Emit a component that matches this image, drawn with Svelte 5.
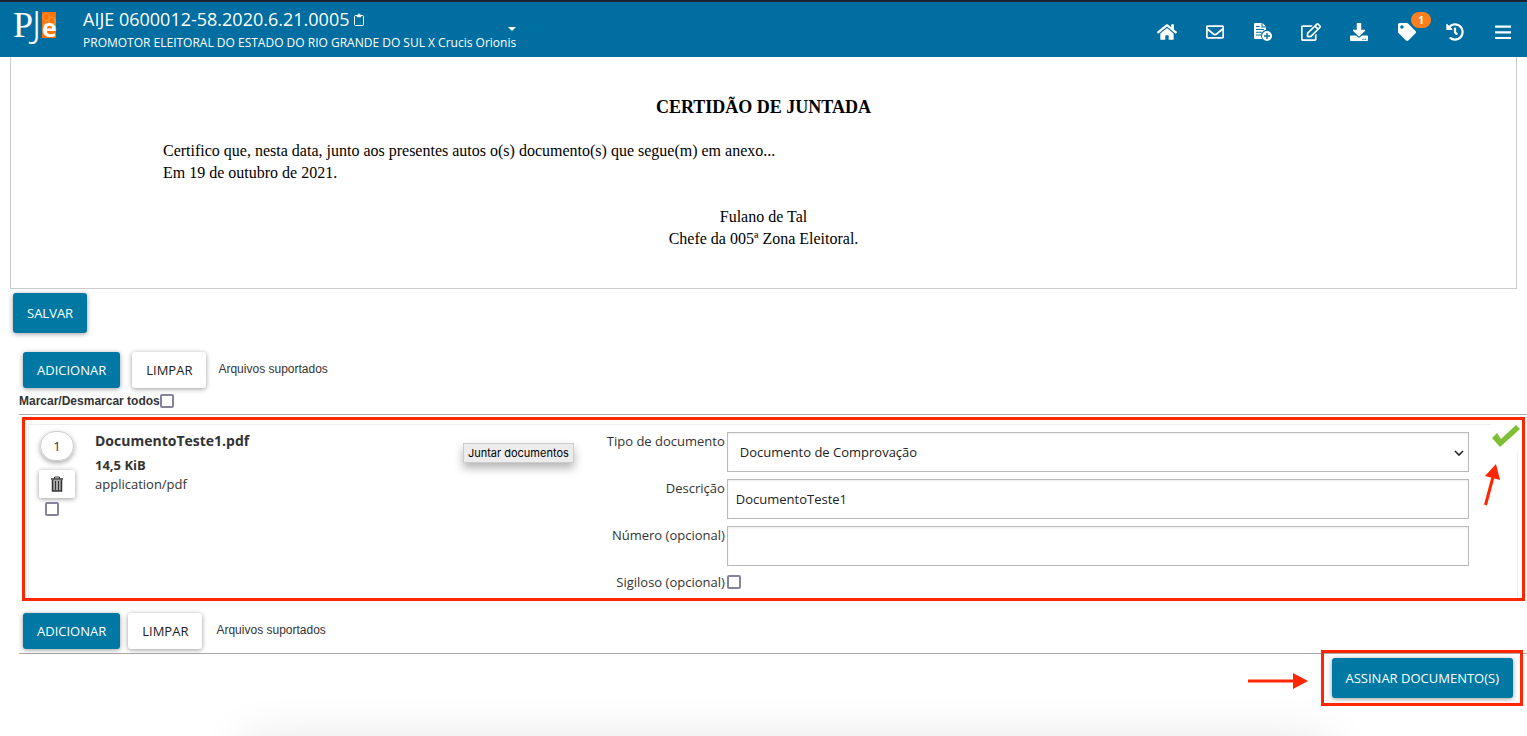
<script>
	let checkAll = $state(false);
	let selected = $state(false);
	let tipo = $state('Documento de Comprovação');
	let descricao = $state('DocumentoTeste1');
	let numero = $state('');
	let sigiloso = $state(false);

	const arquivo = {
		ordem: 1,
		nome: 'DocumentoTeste1.pdf',
		tamanho: '14,5 KiB',
		mime: 'application/pdf'
	};

	// ícones do menu superior
	const menu = [
		{
			title: 'Início',
			box: '0 0 576 512',
			w: 20,
			d: 'M280.37 148.26L96 300.11V464a16 16 0 0 0 16 16l112.06-.29a16 16 0 0 0 15.92-16V368a16 16 0 0 1 16-16h64a16 16 0 0 1 16 16v95.64a16 16 0 0 0 16 16.05L464 480a16 16 0 0 0 16-16V300L295.67 148.26a12.19 12.19 0 0 0-15.3 0zM571.6 251.47L488 182.56V44.05a12 12 0 0 0-12-12h-56a12 12 0 0 0-12 12v72.61L318.47 43a48 48 0 0 0-61 0L4.34 251.47a12 12 0 0 0-1.6 16.9l25.5 31A12 12 0 0 0 45.15 301l235.22-193.74a12.19 12.19 0 0 1 15.3 0L530.9 301a12 12 0 0 0 16.9-1.6l25.5-31a12 12 0 0 0-1.7-16.93z'
		},
		{
			title: 'Expedientes',
			box: '0 0 512 512',
			w: 18,
			d: 'M464 64H48C21.49 64 0 85.49 0 112v288c0 26.51 21.49 48 48 48h416c26.51 0 48-21.49 48-48V112c0-26.51-21.49-48-48-48zm0 48v40.805c-22.422 18.259-58.168 46.651-134.587 106.49-16.841 13.247-50.201 45.072-73.413 44.701-23.208.375-56.579-31.459-73.413-44.701C106.18 199.465 70.425 171.067 48 152.805V112h416zM48 400V214.398c22.914 18.251 55.409 43.862 104.938 82.646 21.857 17.205 60.134 55.186 103.062 54.955 42.717.231 80.509-37.199 103.053-54.947 49.528-38.783 82.032-64.401 104.947-82.653V400H48z'
		},
		{
			title: 'Juntar documentos',
			box: '0 0 18 18',
			w: 18,
			d: 'M1 0h6.500v4.500h4.500v2.200a5.900 5.900 0 0 0-3.800 9.300H1a1 1 0 0 1-1-1V1a1 1 0 0 1 1-1zM2 6v1h8V6zM2 8.700v1h5.800v-1zM2 11.400v1h5v-1zM2 3v1h3.500V3zM8.500 0l3.500 3.500H8.500zM13 8a5 5 0 1 1 0 10 5 5 0 0 1 0-10zM12.300 10v2.300H10v1.400h2.300V16h1.400v-2.300H16v-1.400h-2.300V10z'
		},
		{
			title: 'Editar',
			box: '0 0 576 512',
			w: 20,
			d: 'M402.3 344.9l32-32c5-5 13.7-1.5 13.7 5.7V464c0 26.5-21.5 48-48 48H48c-26.5 0-48-21.5-48-48V112c0-26.5 21.5-48 48-48h273.5c7.1 0 10.7 8.6 5.7 13.7l-32 32c-1.5 1.5-3.5 2.3-5.7 2.3H48v352h352V350.5c0-2.1.8-4.1 2.3-5.6zm156.6-201.8L296.3 405.7l-90.4 10c-26.2 2.9-48.5-19.2-45.6-45.6l10-90.4L432.9 17.1c22.9-22.9 59.9-22.9 82.7 0l43.2 43.2c22.9 22.9 22.9 60 .1 82.8zM460.1 174L402 115.9 216.2 301.8l-7.3 65.3 65.3-7.3L460.1 174zm64.8-79.7l-43.2-43.2c-4.1-4.1-10.8-4.1-14.8 0L436 82l58.1 58.1 30.9-30.9c4-4.2 4-10.8-.1-14.9z'
		},
		{
			title: 'Download',
			box: '0 0 512 512',
			w: 18,
			d: 'M216 0h80c13.3 0 24 10.7 24 24v168h87.7c17.8 0 26.7 21.5 14.1 34.1L269.7 378.3c-7.5 7.5-19.8 7.5-27.3 0L90.1 226.1c-12.6-12.6-3.7-34.1 14.1-34.1H192V24c0-13.3 10.7-24 24-24zm296 376v112c0 13.3-10.7 24-24 24H24c-13.3 0-24-10.7-24-24V376c0-13.3 10.7-24 24-24h146.7l49 49c20.1 20.1 52.5 20.1 72.6 0l49-49H488c13.3 0 24 10.7 24 24zm-124 88c0-11-9-20-20-20s-20 9-20 20 9 20 20 20 20-9 20-20zm64 0c0-11-9-20-20-20s-20 9-20 20 9 20 20 20 20-9 20-20z'
		},
		{
			title: 'Etiquetas',
			box: '0 0 512 512',
			w: 18,
			badge: 1,
			d: 'M0 252.118V48C0 21.49 21.49 0 48 0h204.118a48 48 0 0 1 33.941 14.059l211.882 211.882c18.745 18.745 18.745 49.137 0 67.882L293.823 497.941c-18.745 18.745-49.137 18.745-67.882 0L14.059 286.059A48 48 0 0 1 0 252.118zM112 64c-26.51 0-48 21.49-48 48s21.49 48 48 48 48-21.49 48-48-21.49-48-48-48z'
		},
		{
			title: 'Histórico',
			box: '0 0 512 512',
			w: 18,
			d: 'M504 255.531c.253 136.64-111.18 248.372-247.82 248.468-59.015.042-113.223-20.53-155.822-54.911-11.077-8.94-11.905-25.541-1.839-35.607l11.267-11.267c8.609-8.609 22.353-9.551 31.891-1.984C173.062 425.135 212.781 440 256 440c101.705 0 184-82.311 184-184 0-101.705-82.311-184-184-184-48.814 0-93.149 18.969-126.068 49.932l50.754 50.754c10.08 10.08 2.941 27.314-11.313 27.314H24c-8.837 0-16-7.163-16-16V38.627c0-14.254 17.234-21.393 27.314-11.314l49.372 49.372C129.209 34.136 189.552 8 256 8c136.81 0 247.747 110.78 248 247.531zm-180.912 78.784l9.823-12.63c8.138-10.463 6.253-25.542-4.21-33.679L288 256.349V152c0-13.255-10.745-24-24-24h-16c-13.255 0-24 10.745-24 24v135.651l65.409 50.874c10.463 8.137 25.541 6.253 33.679-4.21z'
		},
		{
			title: 'Menu',
			box: '0 0 16 16',
			w: 16,
			d: 'M0 1.500h16v2.200H0zM0 7.200h16v2.200H0zM0 12.900h16v2.200H0z'
		}
	];

	function limpar() {
		descricao = '';
		numero = '';
		sigiloso = false;
	}
</script>

<header>
	<svg class="logo" viewBox="0 0 46 38" width="46" height="38" role="img" aria-label="PJe">
		<rect x="28" y="1" width="14" height="26" fill="#ff7200" />
		<g fill="none" stroke="#ff9d4a" stroke-width="1">
			<path d="M29 4l3-2 3 2v4l-3 2-3-2zM35 8l3-2 3 2v4l-3 2-3-2zM29 14l3-2 3 2" />
		</g>
		<text x="-1" y="26" class="logo-p">P</text>
		<text x="18" y="26" class="logo-j">J</text>
		<text x="28" y="26" class="logo-e">e</text>
	</svg>
	<div class="processo">
		<h1>
			AIJE 0600012-58.2020.6.21.0005
			<button class="plain" type="button" aria-label="Copiar número">
				<svg viewBox="0 0 10 13" width="10" height="13" fill="none" stroke="#fff">
					<rect x="0.500" y="2.500" width="9" height="10" rx="1" />
					<path d="M3 4V2h1l1-1.400L6 2h1v2z" fill="#fff" stroke-width="0.500" />
				</svg>
			</button>
		</h1>
		<button class="plain partes" type="button">
			PROMOTOR ELEITORAL DO ESTADO DO RIO GRANDE DO SUL X Crucis Orionis
			<span class="caret"></span>
		</button>
	</div>
	<nav>
		{#each menu as item}
			<button class="plain" type="button" aria-label={item.title}>
				<svg viewBox={item.box} width={item.w} height="18" fill="#fff" fill-rule="evenodd">
					<path d={item.d} />
				</svg>
				{#if item.badge}<span class="badge">{item.badge}</span>{/if}
			</button>
		{/each}
	</nav>
</header>

<main>
	<article>
		<h2>CERTIDÃO DE JUNTADA</h2>
		<p>
			Certifico que, nesta data, junto aos presentes autos o(s) documento(s) que segue(m) em anexo...<br />
			Em 19 de outubro de 2021.
		</p>
		<p class="assinatura">
			Fulano de Tal<br />
			Chefe da 005ª Zona Eleitoral.
		</p>
	</article>

	<button class="btn primary salvar" type="button">SALVAR</button>

	<section>
		<div class="toolbar top">
			<button class="btn primary" type="button">ADICIONAR</button>
			<button class="btn" type="button" onclick={limpar}>LIMPAR</button>
			<span>Arquivos suportados</span>
		</div>
		<label class="todos">Marcar/Desmarcar todos<input type="checkbox" bind:checked={checkAll} /></label>

		<div class="lista">
			<div class="destaque">
				<div class="arquivo">
					<div class="acoes">
						<span class="ordem">{arquivo.ordem}</span>
						<button class="lixeira" type="button" aria-label="Excluir">
							<svg viewBox="0 0 14 16" width="14" height="16" fill="none" stroke="#333">
								<path d="M1 3h12" stroke-width="1.500" />
								<path d="M4.500 3V1h5v2" />
								<path d="M2.500 4v11h9V4" fill="#aaa" stroke-width="1.500" />
								<path d="M5.500 5v9M8.500 5v9" />
							</svg>
						</button>
						<input type="checkbox" aria-label="Selecionar arquivo" bind:checked={selected} />
					</div>
					<div class="info">
						<strong class="nome">{arquivo.nome}</strong>
						<strong>{arquivo.tamanho}</strong>
						<span>{arquivo.mime}</span>
						<div class="tooltip" role="tooltip">Juntar documentos</div>
					</div>
					<form autocomplete="off">
						<label for="tipo">Tipo de documento</label>
						<div class="select">
							<select id="tipo" bind:value={tipo}>
								<option>Documento de Comprovação</option>
								<option>Certidão</option>
							</select>
							<svg viewBox="0 0 10 6" width="10" height="6" fill="none" stroke="#222" stroke-width="1.600">
								<path d="M1 1l4 4 4-4" />
							</svg>
						</div>
						<label for="descricao">Descrição</label>
						<input id="descricao" type="text" bind:value={descricao} />
						<label for="numero">Número (opcional)</label>
						<input id="numero" type="text" bind:value={numero} />
						<label for="sigiloso">Sigiloso (opcional)</label>
						<input id="sigiloso" type="checkbox" bind:checked={sigiloso} />
					</form>
					<span class="ok">
						<svg viewBox="0 0 30 24" width="30" height="24">
							<path d="M1 14l5-5 4 6L25 1l4 4L9 23z" fill="#7fbf33" />
						</svg>
					</span>
					<svg class="seta-ok" viewBox="0 0 18 44" width="18" height="44">
						<path d="M2.500 42L10 14" stroke="#ff2600" stroke-width="3" />
						<path d="M13 1l4 16L2 13z" fill="#ff2600" />
					</svg>
				</div>
			</div>
		</div>

		<div class="toolbar bottom">
			<button class="btn primary" type="button">ADICIONAR</button>
			<button class="btn" type="button" onclick={limpar}>LIMPAR</button>
			<span>Arquivos suportados</span>
		</div>
	</section>

	<div class="rodape">
		<svg viewBox="0 0 60 16" width="60" height="16">
			<path d="M0 8h48" stroke="#ff2600" stroke-width="3" />
			<path d="M45 0l15 8-15 8z" fill="#ff2600" />
		</svg>
		<div class="assinar">
			<button class="btn primary" type="button">ASSINAR DOCUMENTO(S)</button>
		</div>
	</div>
</main>
<div class="sombra"></div>

<style>
	:global(body) {
		margin: 0;
		background: #fff;
		color: #333;
		font-family: 'Open Sans', sans-serif;
		font-size: 13px;
	}

	button,
	input,
	select {
		font-family: inherit;
		font-size: inherit;
		box-sizing: border-box;
	}

	svg {
		display: block;
	}

	.plain {
		padding: 0;
		border: 0;
		background: none;
		color: inherit;
		cursor: pointer;
	}

	header {
		display: flex;
		box-sizing: border-box;
		height: 57px;
		border-top: 2px solid #1c2330;
		background: #006ea1;
		color: #fff;
	}

	.logo {
		margin: 9px 23px 0 14px;
		overflow: visible;
		fill: #fff;
	}

	.logo-p {
		font: 36px 'Liberation Serif', serif;
	}

	.logo-j {
		font: 36px 'Noto Sans', sans-serif;
		font-weight: 300;
	}

	.logo-e {
		font: bold 25px 'Open Sans', sans-serif;
	}

	.processo {
		flex: 1;
		padding-top: 5px;
	}

	h1 {
		display: flex;
		align-items: center;
		gap: 5px;
		margin: 0;
		font-size: 18px;
		font-weight: 400;
		line-height: 24px;
	}

	.partes {
		position: relative;
		font-size: 12px;
		line-height: 24px;
		white-space: nowrap;
	}

	.caret {
		position: absolute;
		right: 0;
		top: -4px;
		border: 4px solid transparent;
		border-top-color: #fff;
		border-bottom: 0;
	}

	nav {
		display: flex;
		padding-top: 5px;
	}

	nav button {
		position: relative;
		display: flex;
		align-items: center;
		justify-content: center;
		width: 48px;
	}

	.badge {
		position: absolute;
		top: 5px;
		left: 28px;
		width: 20px;
		border-radius: 8px;
		background: #ff7f1e;
		font-size: 10px;
		font-weight: 700;
		line-height: 16px;
	}

	article {
		box-sizing: border-box;
		height: 232px;
		margin: 0 10px;
		padding: 39px 152px 0;
		border: 1px solid #ccc;
		border-top: 0;
		color: #000;
		font: 16px/22px 'Liberation Serif', serif;
	}

	h2 {
		margin: 0 0 22px;
		font-size: 18px;
		line-height: 22px;
		text-align: center;
	}

	article p {
		margin: 0 0 22px;
	}

	.assinatura {
		text-align: center;
	}

	.btn {
		height: 36px;
		padding: 0 14px;
		border: 0;
		border-radius: 3px;
		background: #fff;
		color: #222;
		box-shadow: 0 1px 5px rgba(0, 0, 0, 0.4);
		cursor: pointer;
	}

	.primary {
		background: #0078a4;
		color: #fff;
	}

	.salvar {
		display: block;
		height: 40px;
		margin: 4px 0 19px 13px;
	}

	section {
		margin-left: 19px;
	}

	.toolbar {
		display: flex;
		gap: 12px;
		padding-left: 4px;
	}

	.toolbar span {
		padding-top: 9px;
		font: 12px/16px 'Liberation Sans', sans-serif;
	}

	.toolbar.bottom {
		gap: 8px;
		padding: 12px 0 4px 4px;
		border-bottom: 1px solid #aaa;
	}

	.toolbar.bottom span {
		padding-left: 6px;
	}

	input[type='checkbox'] {
		appearance: none;
		width: 14px;
		height: 14px;
		margin: 0;
		border: 2px solid #85829a;
		border-radius: 2px;
		background: #fff;
	}

	input[type='checkbox']:checked {
		background: #0078a4;
	}

	.todos {
		display: flex;
		align-items: center;
		height: 26px;
		font: bold 12px/16px 'Liberation Sans', sans-serif;
	}

	.lista {
		padding: 2px 2px 0 3px;
		border-top: 1px solid #aaa;
	}

	.destaque {
		padding: 4px 4px 0 3px;
		border: 3px solid #ff2600;
	}

	.arquivo {
		position: relative;
		display: grid;
		grid-template-columns: 66px 11fr 19fr;
		padding: 7px 48px 6px 0;
		border: 1px solid #eee;
		border-width: 1px 1px 0;
	}

	.acoes {
		display: flex;
		flex-direction: column;
		align-items: center;
		width: 56px;
		margin-top: -1px;
	}

	.ordem {
		box-sizing: border-box;
		width: 34px;
		border: 1px solid #ccc;
		border-radius: 15px;
		box-shadow: 0 2px 5px rgba(0, 0, 0, 0.35);
		line-height: 28px;
		text-align: center;
	}

	.lixeira {
		display: flex;
		align-items: center;
		justify-content: center;
		width: 36px;
		height: 28px;
		margin: 9px 0 4px;
		border: 0;
		border-radius: 2px;
		background: #fff;
		box-shadow: 0 1px 5px rgba(0, 0, 0, 0.4);
	}

	.acoes input {
		align-self: flex-start;
		margin-left: 16px !important;
	}

	.info {
		position: relative;
		display: flex;
		flex-direction: column;
		margin-top: -1px;
		line-height: 19px;
	}

	.nome {
		margin-bottom: 6px;
		font-size: 14px;
	}

	.tooltip {
		position: absolute;
		top: 12px;
		right: 25px;
		padding: 0 4px;
		border: 1px solid #ccc;
		background: #ececec;
		box-shadow: 0 5px 10px rgba(0, 0, 0, 0.3);
		color: #000;
		font: 11px/18px Inter, sans-serif;
	}

	form {
		display: grid;
		grid-template-columns: 126px 1fr;
		gap: 7px 2px;
	}

	form label {
		line-height: 19px;
		text-align: right;
	}

	form input[type='text'],
	select {
		width: 100%;
		height: 40px;
		padding: 0 8px;
		border: 1px solid #bbb;
		border-radius: 0;
		background: #fff;
		color: #222;
		box-shadow: inset 0 1px 2px rgba(0, 0, 0, 0.08);
	}

	.select {
		position: relative;
	}

	select {
		appearance: none;
		padding: 0 12px;
	}

	.select svg {
		position: absolute;
		right: 5px;
		top: 18px;
	}

	form input[type='checkbox'] {
		margin: 2px 0 0;
	}

	.ok {
		position: absolute;
		top: -1px;
		right: -4px;
		padding-bottom: 4px;
		background: #fff;
	}

	.seta-ok {
		position: absolute;
		top: 38px;
		right: 16px;
	}

	.rodape {
		display: flex;
		align-items: center;
		justify-content: flex-end;
		gap: 24px;
		padding: 4px 14px 38px 0;
	}

	.rodape > svg {
		margin-top: 6px;
	}

	.assinar {
		position: relative;
	}

	.assinar .btn {
		display: block;
		height: 40px;
	}

	.assinar::before {
		content: '';
		position: absolute;
		inset: -8px -10px -8px -11px;
		border: 3px solid #ff2600;
		pointer-events: none;
	}

	.sombra {
		position: fixed;
		bottom: -46px;
		left: 16%;
		right: 13%;
		height: 40px;
		box-shadow: 0 0 50px rgba(0, 0, 0, 0.12);
	}
</style>
